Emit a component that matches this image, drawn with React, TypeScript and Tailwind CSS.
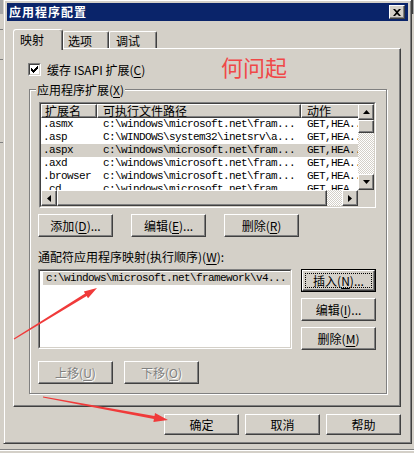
import React from "react";

const cn = (...c: (string | false | undefined)[]) => c.filter(Boolean).join(" ");

const raised =
  "border border-t-white border-l-white border-r-[#404040] border-b-[#404040] shadow-[inset_-1px_-1px_#808080]";
const mono = "font-['Liberation_Mono',monospace] text-[11px] tracking-[-0.6px]";

function Mn({ children }: { children: React.ReactNode }) {
  return <u className="underline-offset-[2px]">{children}</u>;
}

function Button({
  children,
  className,
  disabled,
  primary,
}: {
  children: React.ReactNode;
  className?: string;
  disabled?: boolean;
  primary?: boolean;
}) {
  if (primary) {
    return (
      <div className={cn("border border-black", className)}>
        <div className={cn(raised, "h-full bg-[#d4d0c8] p-[2px]")}>
          <div className="flex h-full items-center justify-center border border-dotted border-black text-[12px] leading-[13px]">
            {children}
          </div>
        </div>
      </div>
    );
  }
  return (
    <div
      className={cn(
        raised,
        "flex items-center justify-center bg-[#d4d0c8] text-[12px] leading-[13px]",
        disabled && "text-[#808080] [text-shadow:1px_1px_0_#fff]",
        className
      )}
    >
      {children}
    </div>
  );
}

function Sunken({ className, children, inner }: { className?: string; children?: React.ReactNode; inner?: string }) {
  return (
    <div className={cn("border border-t-[#808080] border-l-[#808080] border-r-white border-b-white", className)}>
      <div className={cn("h-full border border-t-[#404040] border-l-[#404040] border-r-[#d4d0c8] border-b-[#d4d0c8] bg-white", inner)}>
        {children}
      </div>
    </div>
  );
}

function Arrow({ dir }: { dir: "up" | "down" | "left" | "right" }) {
  const d = {
    up: "M3.5 0L7 4H0z",
    down: "M0 0H7L3.5 4z",
    left: "M0 3.5L4 0V7z",
    right: "M0 0L4 3.5L0 7z",
  }[dir];
  const vertical = dir === "up" || dir === "down";
  return (
    <svg width={vertical ? 7 : 4} height={vertical ? 4 : 7} viewBox={vertical ? "0 0 7 4" : "0 0 4 7"}>
      <path d={d} fill="#000" />
    </svg>
  );
}

const checker =
  "bg-[image:repeating-conic-gradient(#d4d0c8_0_25%,#ffffff_0_50%)] bg-[length:2px_2px]";

const checkPixels = [
  [6, 0],
  [5, 1], [6, 1],
  [0, 2], [4, 2], [5, 2], [6, 2],
  [0, 3], [1, 3], [3, 3], [4, 3], [5, 3],
  [0, 4], [1, 4], [2, 4], [3, 4], [4, 4],
  [1, 5], [2, 5], [3, 5],
  [2, 6],
];

const rows = [
  { ext: ".asmx", path: "c:\\windows\\microsoft.net\\fram...", act: "GET,HEA..." },
  { ext: ".asp", path: "C:\\WINDOWS\\system32\\inetsrv\\a...", act: "GET,HEA..." },
  { ext: ".aspx", path: "c:\\windows\\microsoft.net\\fram...", act: "GET,HEA...", sel: true },
  { ext: ".axd", path: "c:\\windows\\microsoft.net\\fram...", act: "GET,HEA..." },
  { ext: ".browser", path: "c:\\windows\\microsoft.net\\fram...", act: "GET,HEA..." },
  { ext: ".cd", path: "c:\\windows\\microsoft.net\\fram...", act: "GET,HEA..." },
];

export default function App() {
  return (
    <div className="relative flex h-[453px] w-[414px] flex-col overflow-hidden bg-[#d4d0c8] font-['Noto_Sans_CJK_SC','Noto_Sans',sans-serif] text-black">
      <div className="-mt-px flex">
        {/* background window, left edge */}
        <div className="flex w-[3px] flex-col">
          <div className="h-[15px] bg-[#a6a6a6]" />
          <div className="mt-[15px] h-px bg-[#808080]" />
          <div className="mt-[29px] h-px bg-[#808080]" />
          <div className="mt-[82px] h-px bg-[#808080]" />
        </div>

        {/* dialog */}
        <div className="h-[445px] w-[409px] border border-t-[#d4d0c8] border-l-[#d4d0c8] border-r-[#404040] border-b-[#404040] p-[3px] shadow-[inset_1px_1px_#fff,inset_-1px_-1px_#808080]">
          {/* title bar */}
          <div className="flex h-[18px] items-center justify-between bg-[#0a246a] pl-[2px] pr-[3px]">
            <span className="text-[12px] font-bold leading-[14px] tracking-[1px] text-white">应用程序配置</span>
            <div className={cn(raised, "flex h-[14px] w-[16px] items-center justify-center bg-[#d4d0c8]")}>
              <svg width="8" height="7" viewBox="0 0 8 7">
                <path d="M0 0h2l2 2 2-2h2L5 3.5 8 7H6L4 5 2 7H0l3-3.5z" fill="#000" />
              </svg>
            </div>
          </div>

          {/* tabs */}
          <div className="ml-[6px] mt-[8px] flex h-[19px] items-end text-[12px] leading-[13px]">
            <div className="relative z-10 -mb-[2px] h-[21px] w-[50px] rounded-t-[3px] border-l border-r border-t border-t-white border-l-white border-r-[#404040] bg-[#d4d0c8] pl-[6px] pt-[3px] shadow-[inset_-1px_0_#808080]">
              映射
            </div>
            <div className="h-[17px] w-[46px] rounded-t-[2px] border-l border-r border-t border-t-white border-l-white border-r-[#404040] pl-[4px] pt-[2px] shadow-[inset_-1px_0_#808080]">
              选项
            </div>
            <div className="h-[17px] w-[48px] rounded-t-[2px] border-l border-r border-t border-t-white border-l-white border-r-[#404040] pl-[6px] pt-[2px] shadow-[inset_-1px_0_#808080]">
              调试
            </div>
          </div>

          {/* tab panel */}
          <div className="relative ml-[6px] flex h-[359px] w-[388px] flex-col border border-t-white border-l-white border-r-[#404040] border-b-[#404040] shadow-[inset_-1px_-1px_#808080]">
            <div className="ml-[14px] mt-[14px] flex items-center gap-[6px]">
              <Sunken className="h-[13px] w-[13px]" inner="flex items-center justify-center">
                <svg width="7" height="7" viewBox="0 0 7 7">
                  {checkPixels.map(([x, y]) => (
                    <rect key={`${x}-${y}`} x={x} y={y} width="1" height="1" fill="#000" />
                  ))}
                </svg>
              </Sunken>
              <span className="text-[12px] leading-[13px]">
                缓存 ISAPI 扩展(<Mn>C</Mn>)
              </span>
            </div>

            <span className="absolute left-[207px] top-[4px] text-[22px] leading-[26px] text-[#f04848]">何问起</span>

            {/* group box */}
            <div className="ml-[15px] mt-[13px] flex h-[305px] w-[358px] flex-col border border-[#808080] shadow-[1px_1px_#fff,inset_1px_1px_#fff]">
              <span className="-mt-[7px] ml-[6px] self-start bg-[#d4d0c8] px-px text-[12px] leading-[13px]">
                应用程序扩展(<Mn>X</Mn>)
              </span>

              {/* list view */}
              <Sunken className="ml-[9px] mt-[6px] h-[106px] w-[337px]" inner="flex flex-col">
                <div className="flex h-[86px]">
                  <div className="w-[317px] overflow-hidden">
                    <div className="flex h-[14px] w-[400px] bg-[#d4d0c8] text-[12px]">
                      <div className={cn(raised, "flex w-[56px] items-center pl-[3px] leading-none")}>扩展名</div>
                      <div className={cn(raised, "flex w-[204px] items-center pl-[5px] leading-none")}>可执行文件路径</div>
                      <div className={cn(raised, "flex w-[120px] items-center pl-[5px] leading-none")}>动作</div>
                    </div>
                    {rows.map((r) => (
                      <div
                        key={r.ext}
                        className={cn("flex h-[13px] whitespace-nowrap leading-[13px]", mono, r.sel && "bg-[#d4d0c8]")}
                      >
                        <div className="w-[56px] pl-[2px]">{r.ext}</div>
                        <div className="w-[204px] pl-[6px]">{r.path}</div>
                        <div className="w-[57px] overflow-hidden pl-[6px]">{r.act}</div>
                      </div>
                    ))}
                  </div>
                  {/* vertical scrollbar */}
                  <div className="flex w-[16px] flex-col">
                    <div className={cn(raised, "flex h-[16px] items-center justify-center bg-[#d4d0c8]")}>
                      <Arrow dir="up" />
                    </div>
                    <div className={cn(raised, "h-[13px] bg-[#d4d0c8]")} />
                    <div className={cn("flex-1", checker)} />
                    <div className={cn(raised, "flex h-[16px] items-center justify-center bg-[#d4d0c8]")}>
                      <Arrow dir="down" />
                    </div>
                  </div>
                </div>
                {/* horizontal scrollbar */}
                <div className="flex h-[16px]">
                  <div className={cn(raised, "flex w-[16px] items-center justify-center bg-[#d4d0c8]")}>
                    <Arrow dir="left" />
                  </div>
                  <div className={cn(raised, "w-[270px] bg-[#d4d0c8]")} />
                  <div className={cn("flex-1", checker)} />
                  <div className={cn(raised, "flex w-[16px] items-center justify-center bg-[#d4d0c8]")}>
                    <Arrow dir="right" />
                  </div>
                  <div className="w-[16px] bg-[#d4d0c8]" />
                </div>
              </Sunken>

              <div className="ml-[8px] mt-[6px] flex gap-[18px]">
                <Button className="h-[23px] w-[75px]">
                  添加(<Mn>D</Mn>)...
                </Button>
                <Button className="h-[23px] w-[75px]">
                  编辑(<Mn>E</Mn>)...
                </Button>
                <Button className="h-[23px] w-[75px]">
                  删除(<Mn>R</Mn>)
                </Button>
              </div>

              <div className="ml-[8px] mt-[13px] text-[12px] leading-[13px]">
                通配符应用程序映射(执行顺序)(<Mn>W</Mn>):
              </div>

              <div className="ml-[8px] mt-[6px] flex gap-[9px]">
                <Sunken className="h-[80px] w-[254px]" inner="pl-[1px] pt-px">
                  <div className={cn("ml-[2px] h-[13px] whitespace-nowrap bg-[#d4d0c8] pl-[3px] leading-[13px]", mono)}>
                    c:\windows\microsoft.net\framework\v4...
                  </div>
                </Sunken>
                <div className="flex flex-col gap-[6px]">
                  <Button primary className="h-[23px] w-[75px]">
                    插入(<Mn>N</Mn>)...
                  </Button>
                  <Button className="h-[23px] w-[75px]">
                    编辑(<Mn>I</Mn>)...
                  </Button>
                  <Button className="h-[23px] w-[75px]">
                    删除(<Mn>M</Mn>)
                  </Button>
                </div>
              </div>

              <div className="ml-[8px] mt-[11px] flex gap-[11px]">
                <Button disabled className="h-[23px] w-[75px]">
                  上移(<Mn>U</Mn>)
                </Button>
                <Button disabled className="h-[23px] w-[75px]">
                  下移(<Mn>O</Mn>)
                </Button>
              </div>
            </div>
          </div>

          {/* dialog buttons */}
          <div className="ml-[6px] mt-[7px] flex w-[388px] justify-end gap-[6px]">
            <Button className="h-[21px] w-[75px]">确定</Button>
            <Button className="h-[21px] w-[75px]">取消</Button>
            <Button className="h-[21px] w-[75px]">帮助</Button>
          </div>
        </div>

        {/* background window, right edge */}
        <div className="flex flex-1 flex-col">
          <div className="h-[15px] border-l border-[#404040] bg-[#a6a6a6]" />
        </div>
      </div>

      {/* background window, bottom edge */}
      <div className="mt-[5px] h-px bg-[#808080]" />
      <div className="h-px bg-white" />

      {/* red annotation arrows */}
      <svg className="pointer-events-none absolute inset-0" width="414" height="453" viewBox="0 0 414 453">
        <polygon
          points="13.7,338.6 85.1,293.5 83.8,291.4 97,288 88,298.2 86.7,296.1 14.3,339.4"
          fill="#f03a3a"
        />
        <polygon
          points="43.1,396.5 154.5,416 155,413.1 168,420 153.4,421.9 153.9,419 42.9,397.5"
          fill="#f03a3a"
        />
      </svg>
    </div>
  );
}
